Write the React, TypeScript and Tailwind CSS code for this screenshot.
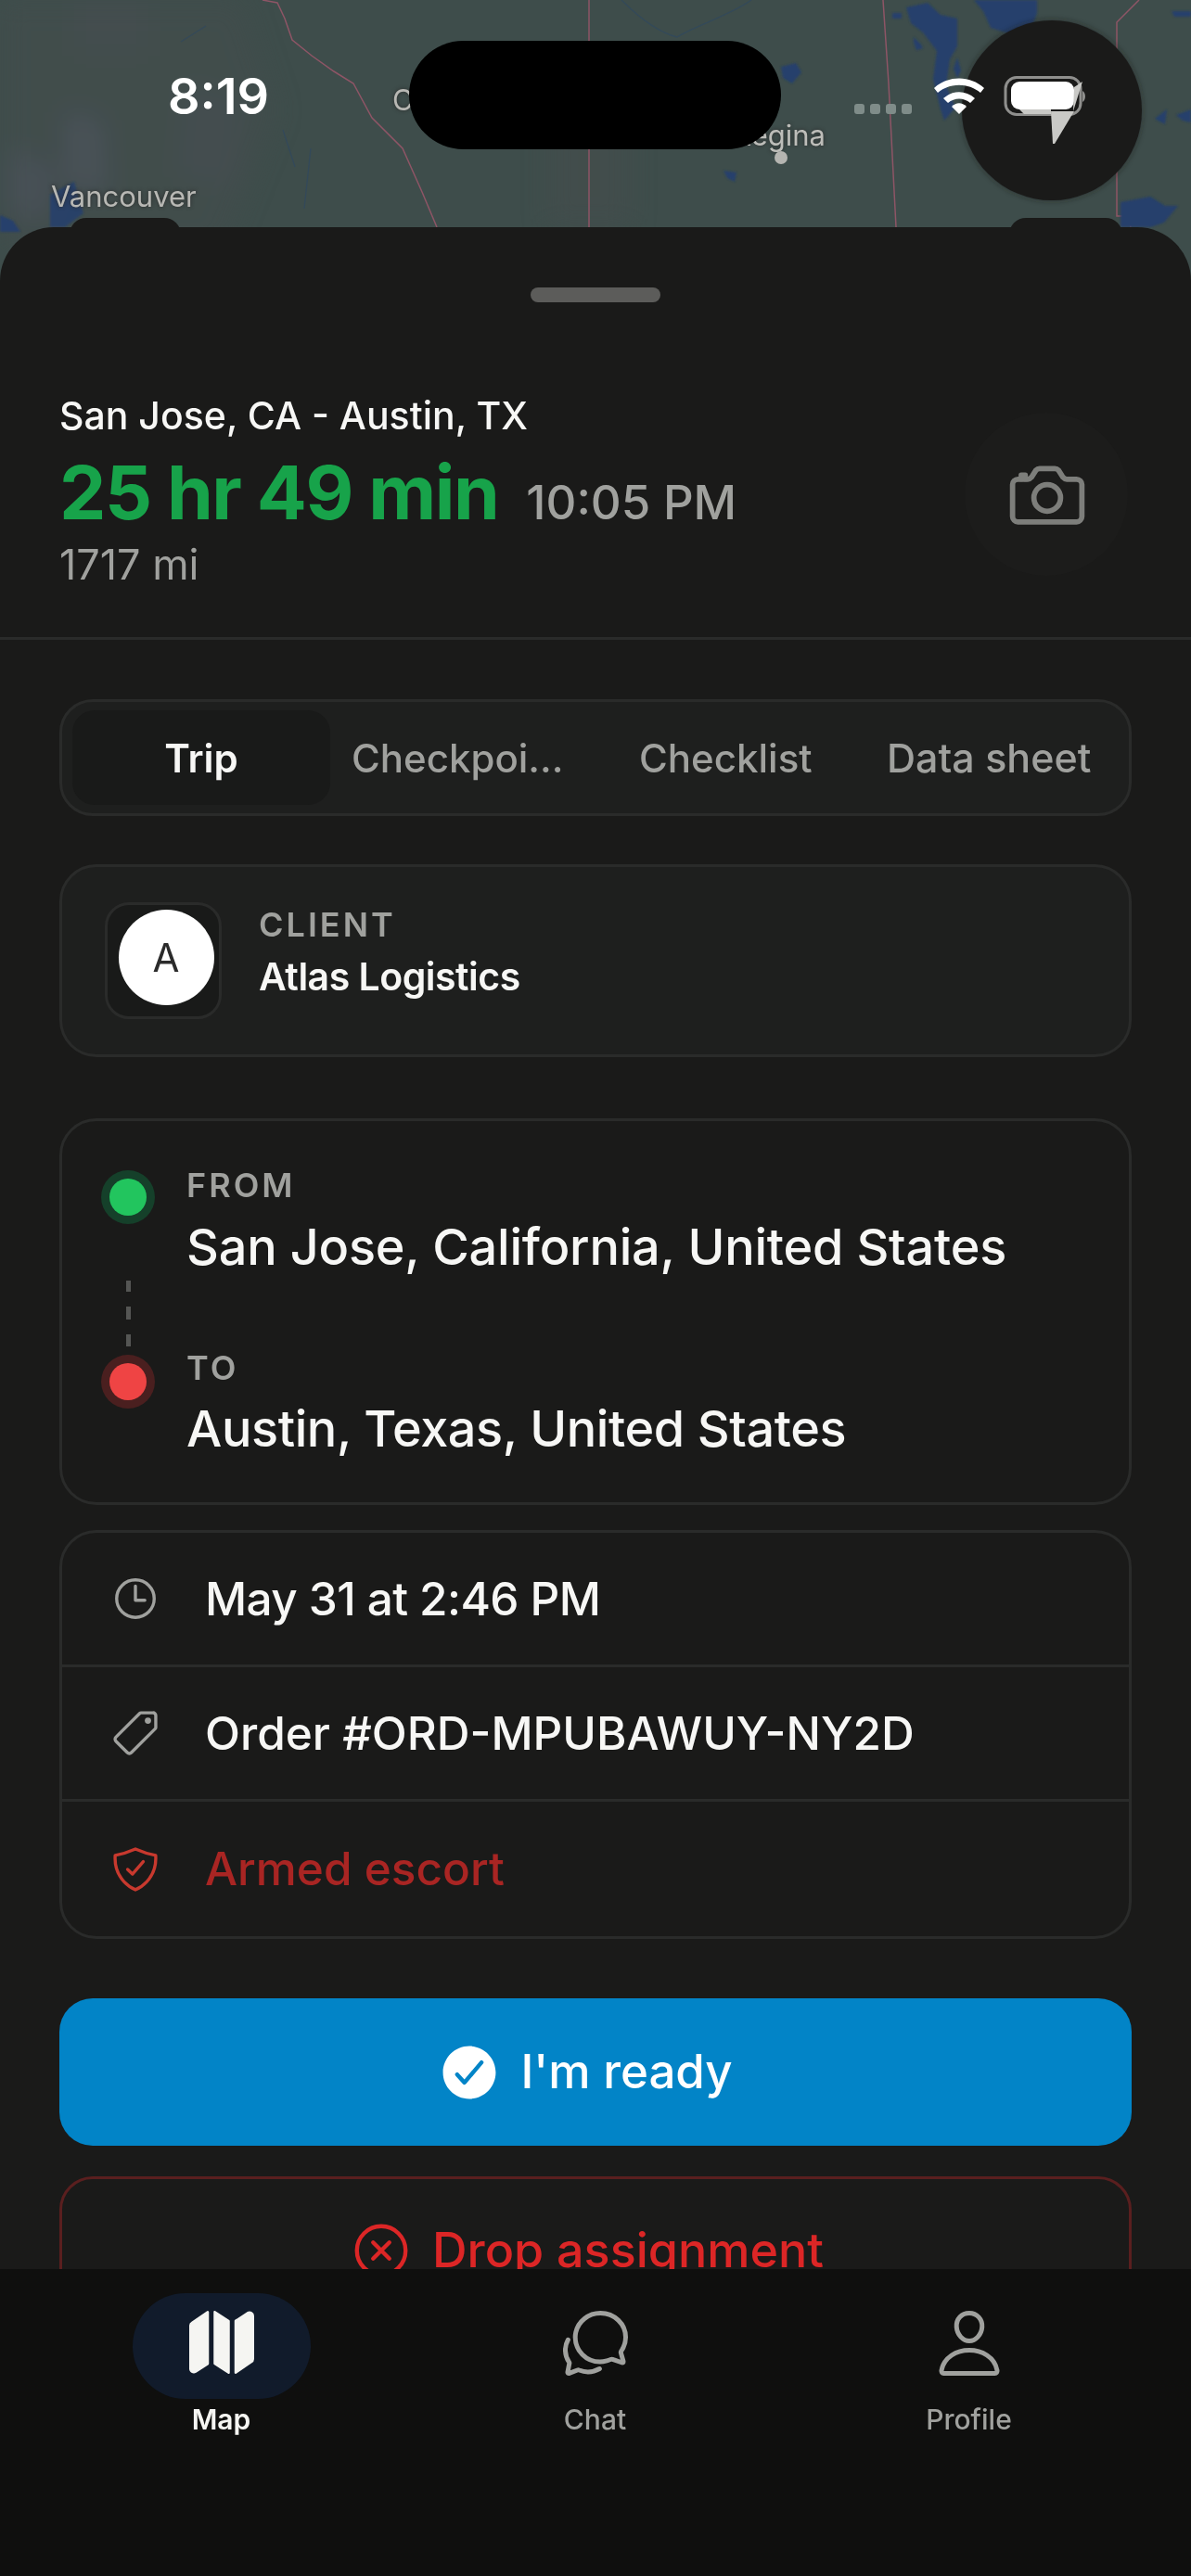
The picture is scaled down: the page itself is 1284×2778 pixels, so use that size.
import {
  IoCameraOutline,
  IoChatbubblesOutline,
  IoCheckmarkCircle,
  IoCloseCircleOutline,
  IoMap,
  IoPersonOutline,
  IoPricetagOutline,
  IoShieldCheckmarkOutline,
  IoTimeOutline,
} from 'react-icons/io5';

const MapBackdrop = () => (
  <svg className="absolute left-0 top-0" width="1284" height="270" viewBox="0 0 1284 270">
    <defs>
      <filter id="soft" x="-30%" y="-30%" width="160%" height="160%">
        <feGaussianBlur stdDeviation="14" />
      </filter>
      <filter id="lakeSoft">
        <feGaussianBlur stdDeviation="0.8" />
      </filter>
      <filter id="shade" x="-10%" y="-10%" width="120%" height="120%">
        <feGaussianBlur stdDeviation="3" />
      </filter>
    </defs>
    <rect width="1284" height="270" fill="#3e4d4b" />
    <g filter="url(#soft)" opacity="0.45">
      <path d="M0 0H260L300 120L240 270H0Z" fill="#444e4d" />
      <path d="M10 160L60 180L50 240L10 230Z" fill="#555465" />
      <path d="M70 120L110 130L115 210L70 200Z" fill="#595868" />
      <path d="M200 90L260 110L250 200L190 190Z" fill="#4e4d56" />
      <path d="M590 130H680V245H590Z" fill="#464e4d" />
      <path d="M80 0H160V60H80Z" fill="#4b4d52" />
    </g>
    <g fill="none" stroke="#8e5566" strokeWidth="1.5">
      <path d="M283 0L299 3L307 20L315 43L336 60L360 77L381 90L401 127L434 160L455 207L471 245" />
      <path d="M635 0V245" />
      <path d="M952 0L958 90L966 245" />
      <path d="M1228 0L1204 24V233H1216L1219 245" />
    </g>
    <g fill="none" stroke="#2d4763" strokeWidth="1.4" opacity="0.6">
      <path d="M670 0C690 20 710 35 730 40C745 30 790 15 810 0" />
      <path d="M195 45L222 28" />
      <path d="M305 140L318 180" />
      <path d="M328 225L335 160" />
    </g>
    <g fill="#25406c" filter="url(#lakeSoft)">
      <path d="M977 8L1000 3L1014 16L1032 20L1032 50L1024 64L1020 92L1030 116L1018 130L1014 118L1006 85L1010 55L995 35L982 25Z" />
      <path d="M962 14H972V20H962Z" />
      <path d="M985 40L993 48L995 52L988 54L985 46Z" />
      <path d="M1050 0H1118V14L1112 30L1094 38L1068 30L1060 12Z" />
      <path d="M1032 62L1036 76L1032 84L1028 74Z" />
      <path d="M842 72L858 68L864 78L854 90L844 84Z" />
      <path d="M780 184L794 186L792 196L784 192Z" />
      <path d="M1263 12H1284V18H1266Z" />
      <path d="M1245 128L1258 118L1256 134Z" />
      <path d="M1268 124L1284 118V132L1275 130Z" />
      <path d="M1208 218L1240 212L1256 222L1270 222L1255 240L1240 245H1208Z" />
      <path d="M54 210L80 196L90 230L70 245H54Z" opacity="0.85" />
      <path d="M0 232L14 238L22 250H0Z" />
    </g>
    <circle cx="1134" cy="119" r="97" fill="#1a1a19" opacity="0.6" filter="url(#shade)" />
  </svg>
);

const Row = ({ icon, text, className }: { icon: React.ReactNode; text: string; className?: string }) => (
  <div className="flex h-[145px] items-center gap-[48px] border-b-[3px] border-[#2a2b2a] pl-[52px] last:border-b-0">
    {icon}
    <span className={`text-[49.5px] font-medium ${className ?? 'text-[#f7f7f5]'}`}>{text}</span>
  </div>
);

const App = () => {
  return (
    <div className="relative flex h-[2778px] w-[1284px] flex-col overflow-hidden bg-[#3e4d4b] font-['Inter',sans-serif]">
      <MapBackdrop />

      {/* status bar + floating map buttons */}
      <div className="relative h-[245px] shrink-0">
        <span className="absolute left-[181px] top-[70px] text-[54px] leading-[68px] font-semibold text-white">8:19</span>
        <span className="absolute left-[423px] top-[92px] text-[31px] leading-[32px] text-[#b8b8b4] [text-shadow:0_0_4px_#2a2a2a]">C</span>
        <span className="absolute right-[394px] top-[128px] text-[31px] leading-[36px] text-[#bdbdb9] [text-shadow:0_0_4px_#2a2a2a]">Regina</span>
        <span className="absolute left-[835px] top-[163px] h-[14px] w-[14px] rounded-full bg-[#b5b5b1]" />
        <span className="absolute left-[55px] top-[193px] text-[31px] leading-[38px] text-[#b8b8b4] [text-shadow:0_0_4px_#2a2a2a]">Vancouver</span>

        <div className="absolute left-[441px] top-[44px] h-[117px] w-[401px] rounded-full bg-black" />

        <div className="absolute left-[1037px] top-[22px] h-[194px] w-[194px] rounded-full bg-[#1a1a19]" />
        <div className="absolute left-[75px] top-[235px] h-[20px] w-[120px] rounded-t-[18px] bg-[#1a1a19]" />
        <div className="absolute left-[1088px] top-[235px] h-[20px] w-[122px] rounded-t-[18px] bg-[#1a1a19]" />

        <div className="absolute left-[921px] top-[112px] flex gap-[6px]">
          <span className="h-[11px] w-[11px] rounded-[3px] bg-[#7f8c89]" />
          <span className="h-[11px] w-[11px] rounded-[3px] bg-[#7f8c89]" />
          <span className="h-[11px] w-[11px] rounded-[3px] bg-[#7f8c89]" />
          <span className="h-[11px] w-[11px] rounded-[3px] bg-[#7f8c89]" />
        </div>
        <svg className="absolute left-[1005px] top-[82px]" width="58" height="42" viewBox="0 0 58 42">
          <path d="M2 13C17 -1 41 -1 56 13L52 18C39 7 19 7 6 18Z" fill="#fff" />
          <path d="M12 24C22 15 36 15 46 24L41 29C34 23 24 23 17 29Z" fill="#fff" />
          <path d="M21 33C26 28 32 28 37 33L29 41Z" fill="#fff" />
        </svg>
        <svg className="absolute left-[1082px] top-[82px]" width="90" height="76" viewBox="0 0 90 76">
          <rect x="2" y="1.5" width="81" height="40" rx="12" fill="none" stroke="#8f8f8d" strokeWidth="3" />
          <rect x="8" y="6" width="68" height="30" rx="9" fill="#fff" />
          <path d="M17 36H51V41H22Z" fill="#c9c9c6" />
          <path d="M51 38H76L55 73H53Z" fill="#c9c9c6" />
          <path d="M75 38L85 6L76 12Z" fill="#c9c9c6" />
          <path d="M85 16C89 18 89 26 85 28Z" fill="#8f8f8d" />
        </svg>
      </div>

      {/* bottom sheet */}
      <div className="relative flex min-h-0 flex-1 flex-col overflow-hidden rounded-t-[58px] bg-[#1a1a19]">
        <div className="mx-auto mt-[65px] h-[16px] w-[140px] shrink-0 rounded-full bg-[#5c5c5a]" />

        <div className="flex h-[364px] shrink-0 items-start justify-between border-b-[3px] border-[#2a2b2a] px-[64px] pt-[97px]">
          <div className="flex flex-col">
            <span className="text-[41px] leading-[50px] font-medium text-[#f7f7f5]">San Jose, CA - Austin, TX</span>
            <div className="mt-[8px] flex items-baseline gap-[30px]">
              <span className="text-[80px] leading-[100px] font-bold tracking-[-1.5px] text-[#17a34a]">25 hr 49 min</span>
              <span className="text-[51px] leading-[56px] font-medium text-[#a0a19e]">10:05 PM</span>
            </div>
            <span className="mt-[3px] text-[45px] leading-[50px] text-[#a0a19e]">1717 mi</span>
          </div>
          <div className="mt-[22px] mr-[4px] flex h-[176px] w-[176px] items-center justify-center rounded-full bg-[#1c1c1b]">
            <IoCameraOutline className="mt-[2px] ml-[2px] text-[#7d7e7b]" size={92} />
          </div>
        </div>

        <div className="flex min-h-0 flex-1 flex-col overflow-hidden px-[64px] pt-[64px]">
          <div className="flex h-[126px] shrink-0 items-center rounded-[36px] border-[3px] border-[#2a2b2a] bg-[#1e1f1e] px-[11px]">
            <div className="flex h-[102px] w-[278px] items-center justify-center rounded-[24px] bg-[#191a19] text-[42px] font-semibold text-[#f7f7f5]">
              Trip
            </div>
            <div className="ml-[23px] w-[226px] text-[42px] font-medium whitespace-nowrap text-[#a0a19e]">Checkpoi...</div>
            <div className="ml-[84px] w-[190px] text-[42px] font-medium whitespace-nowrap text-[#a0a19e]">Checklist</div>
            <div className="ml-[77px] text-[43px] font-medium whitespace-nowrap text-[#a0a19e]">Data sheet</div>
          </div>

          <div className="mt-[52px] flex h-[208px] shrink-0 items-center gap-[40px] rounded-[40px] border-[3px] border-[#2a2b2a] bg-[#1e1f1e] pl-[46px]">
            <div className="flex h-[126px] w-[126px] items-center justify-center rounded-[26px] border-[3px] border-[#2a2b2a] bg-[#191a19]">
              <div className="mb-[8px] ml-[6px] flex h-[103px] w-[103px] shrink-0 items-center justify-center rounded-full bg-white text-[42px] text-[#2b2b2b]">
                A
              </div>
            </div>
            <div className="flex flex-col pb-[19px]">
              <span className="text-[36px] leading-[44px] font-semibold tracking-[3px] text-[#a0a19e]">CLIENT</span>
              <span className="mt-[9px] text-[41px] leading-[50px] font-semibold tracking-[-0.5px] text-[#f7f7f5]">Atlas Logistics</span>
            </div>
          </div>

          <div className="mt-[66px] flex h-[417px] shrink-0 gap-[34px] rounded-[40px] border-[3px] border-[#2a2b2a] pl-[42px] pt-[53px]">
            <div className="flex w-[58px] flex-col items-center">
              <div className="flex h-[58px] w-[58px] items-center justify-center rounded-full bg-[#15402a]">
                <div className="h-[40px] w-[40px] rounded-full bg-[#22c55e]" />
              </div>
              <div className="mt-[61px] h-[12px] w-[5px] bg-[#555654]" />
              <div className="mt-[16px] h-[14px] w-[5px] bg-[#555654]" />
              <div className="mt-[16px] h-[13px] w-[5px] bg-[#555654]" />
              <div className="mt-[9px] flex h-[58px] w-[58px] items-center justify-center rounded-full bg-[#4a1f1f]">
                <div className="h-[40px] w-[40px] rounded-full bg-[#ef4444]" />
              </div>
            </div>
            <div className="flex flex-col">
              <span className="mt-[-2px] text-[36px] leading-[36px] font-semibold tracking-[3px] text-[#a0a19e]">FROM</span>
              <span className="mt-[17px] text-[54px] leading-[64px] font-medium tracking-[-0.2px] text-[#f7f7f5]">San Jose, California, United States</span>
              <span className="mt-[80px] text-[36px] leading-[36px] font-semibold tracking-[3px] text-[#a0a19e]">TO</span>
              <span className="mt-[16px] text-[54px] leading-[64px] font-medium tracking-[-0.4px] text-[#f7f7f5]">Austin, Texas, United States</span>
            </div>
          </div>

          <div className="mt-[27px] shrink-0 rounded-[40px] border-[3px] border-[#2a2b2a]">
            <Row icon={<IoTimeOutline className="text-[#a0a19e]" size={54} />} text="May 31 at 2:46 PM" className="tracking-[-0.6px] text-[#f7f7f5]" />
            <Row icon={<IoPricetagOutline className="text-[#a0a19e]" size={54} />} text="Order #ORD-MPUBAWUY-NY2D" />
            <Row icon={<IoShieldCheckmarkOutline className="text-[#c8392e]" size={54} />} text="Armed escort" className="text-[#a92523]" />
          </div>

          <div className="mt-[64px] flex h-[159px] shrink-0 items-center justify-center gap-[20px] rounded-[36px] bg-[#0284c7] pr-[23px] text-[51px] font-medium text-white">
            <IoCheckmarkCircle size={70} />
            I'm ready
          </div>

          <div className="mt-[33px] flex h-[159px] shrink-0 items-center justify-center gap-[20px] rounded-[36px] border-[3px] border-[#5a1f1f] pr-[20px] text-[52px] font-medium text-[#dc2626]">
            <IoCloseCircleOutline size={70} />
            Drop assignment
          </div>
        </div>
      </div>

      {/* tab bar */}
      <div className="relative flex h-[331px] shrink-0 items-start bg-[#0f0f0e] px-[37px] pt-[26px]">
        <div className="flex w-[403px] flex-col items-center">
          <div className="flex h-[114px] w-[192px] items-center justify-center rounded-full bg-[#111b2b]">
            <IoMap className="mb-[8px] text-[#f5f5f2]" size={80} />
          </div>
          <span className="mt-[3px] text-[30px] leading-[38px] font-semibold text-[#f5f5f2]">Map</span>
        </div>
        <div className="flex w-[403px] flex-col items-center">
          <div className="flex h-[114px] items-center justify-center">
            <IoChatbubblesOutline className="mb-[6px] text-[#a0a19e]" size={80} />
          </div>
          <span className="mt-[3px] text-[30px] leading-[38px] font-medium text-[#a0a19e]">Chat</span>
        </div>
        <div className="flex w-[403px] flex-col items-center">
          <div className="flex h-[114px] items-center justify-center">
            <IoPersonOutline className="mb-[6px] text-[#a0a19e]" size={80} />
          </div>
          <span className="mt-[3px] text-[30px] leading-[38px] font-medium text-[#a0a19e]">Profile</span>
        </div>
      </div>
    </div>
  );
};

export default App;
